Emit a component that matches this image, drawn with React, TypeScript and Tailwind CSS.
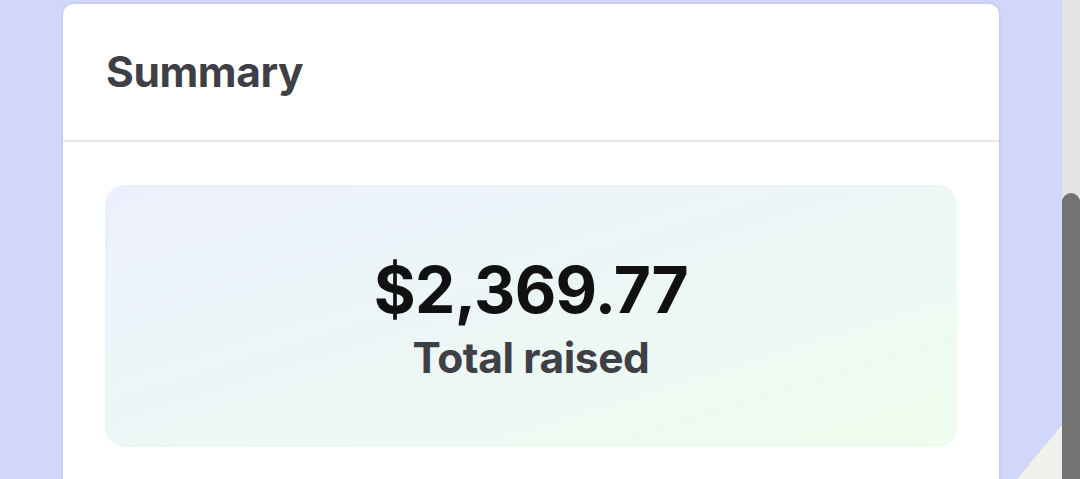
import React from "react";

export default function App() {
  return (
    <div
      className="flex h-[479px] w-[1080px] overflow-hidden"
      style={{ fontFamily: "Inter, 'Noto Sans', sans-serif" }}
    >
      <div className="relative flex-1 bg-[#d0d7fb] px-[63px] pt-[4px]">
        <div className="rounded-[10px] bg-white shadow-[0_0_3px_rgba(80,90,160,0.25)] h-[600px]">
          <div className="flex h-[138px] items-center border-b-2 border-[#e6e7ea] px-[43px]">
            <h2 className="text-[42.5px] font-bold leading-none text-[#3f3f46] tracking-[-0.01em]">
              Summary
            </h2>
          </div>
          <div className="px-[42px] pt-[43px]">
            <div className="flex h-[262px] flex-col items-center rounded-[20px] bg-gradient-to-br from-[#ecf0fd] to-[#eefdee] pt-[73px]">
              <div className="text-[64px] font-bold leading-[64px] text-[#111111] tracking-[-0.01em]">
                $2,369.77
              </div>
              <div className="mt-[12px] text-[42.5px] font-bold leading-[48px] text-[#3f3f46] tracking-[-0.01em]">
                Total raised
              </div>
            </div>
          </div>
        </div>
        <svg
          className="absolute bottom-0 right-0"
          width="45"
          height="54"
          viewBox="0 0 45 54"
        >
          <polygon points="45,0 45,54 0,54" fill="#f1f0ea" />
        </svg>
      </div>
      <div className="flex w-[18px] flex-col bg-[#e4e4e4]">
        <div className="h-[193px]" />
        <div className="flex-1 rounded-t-full bg-[#737373]" />
      </div>
    </div>
  );
}
